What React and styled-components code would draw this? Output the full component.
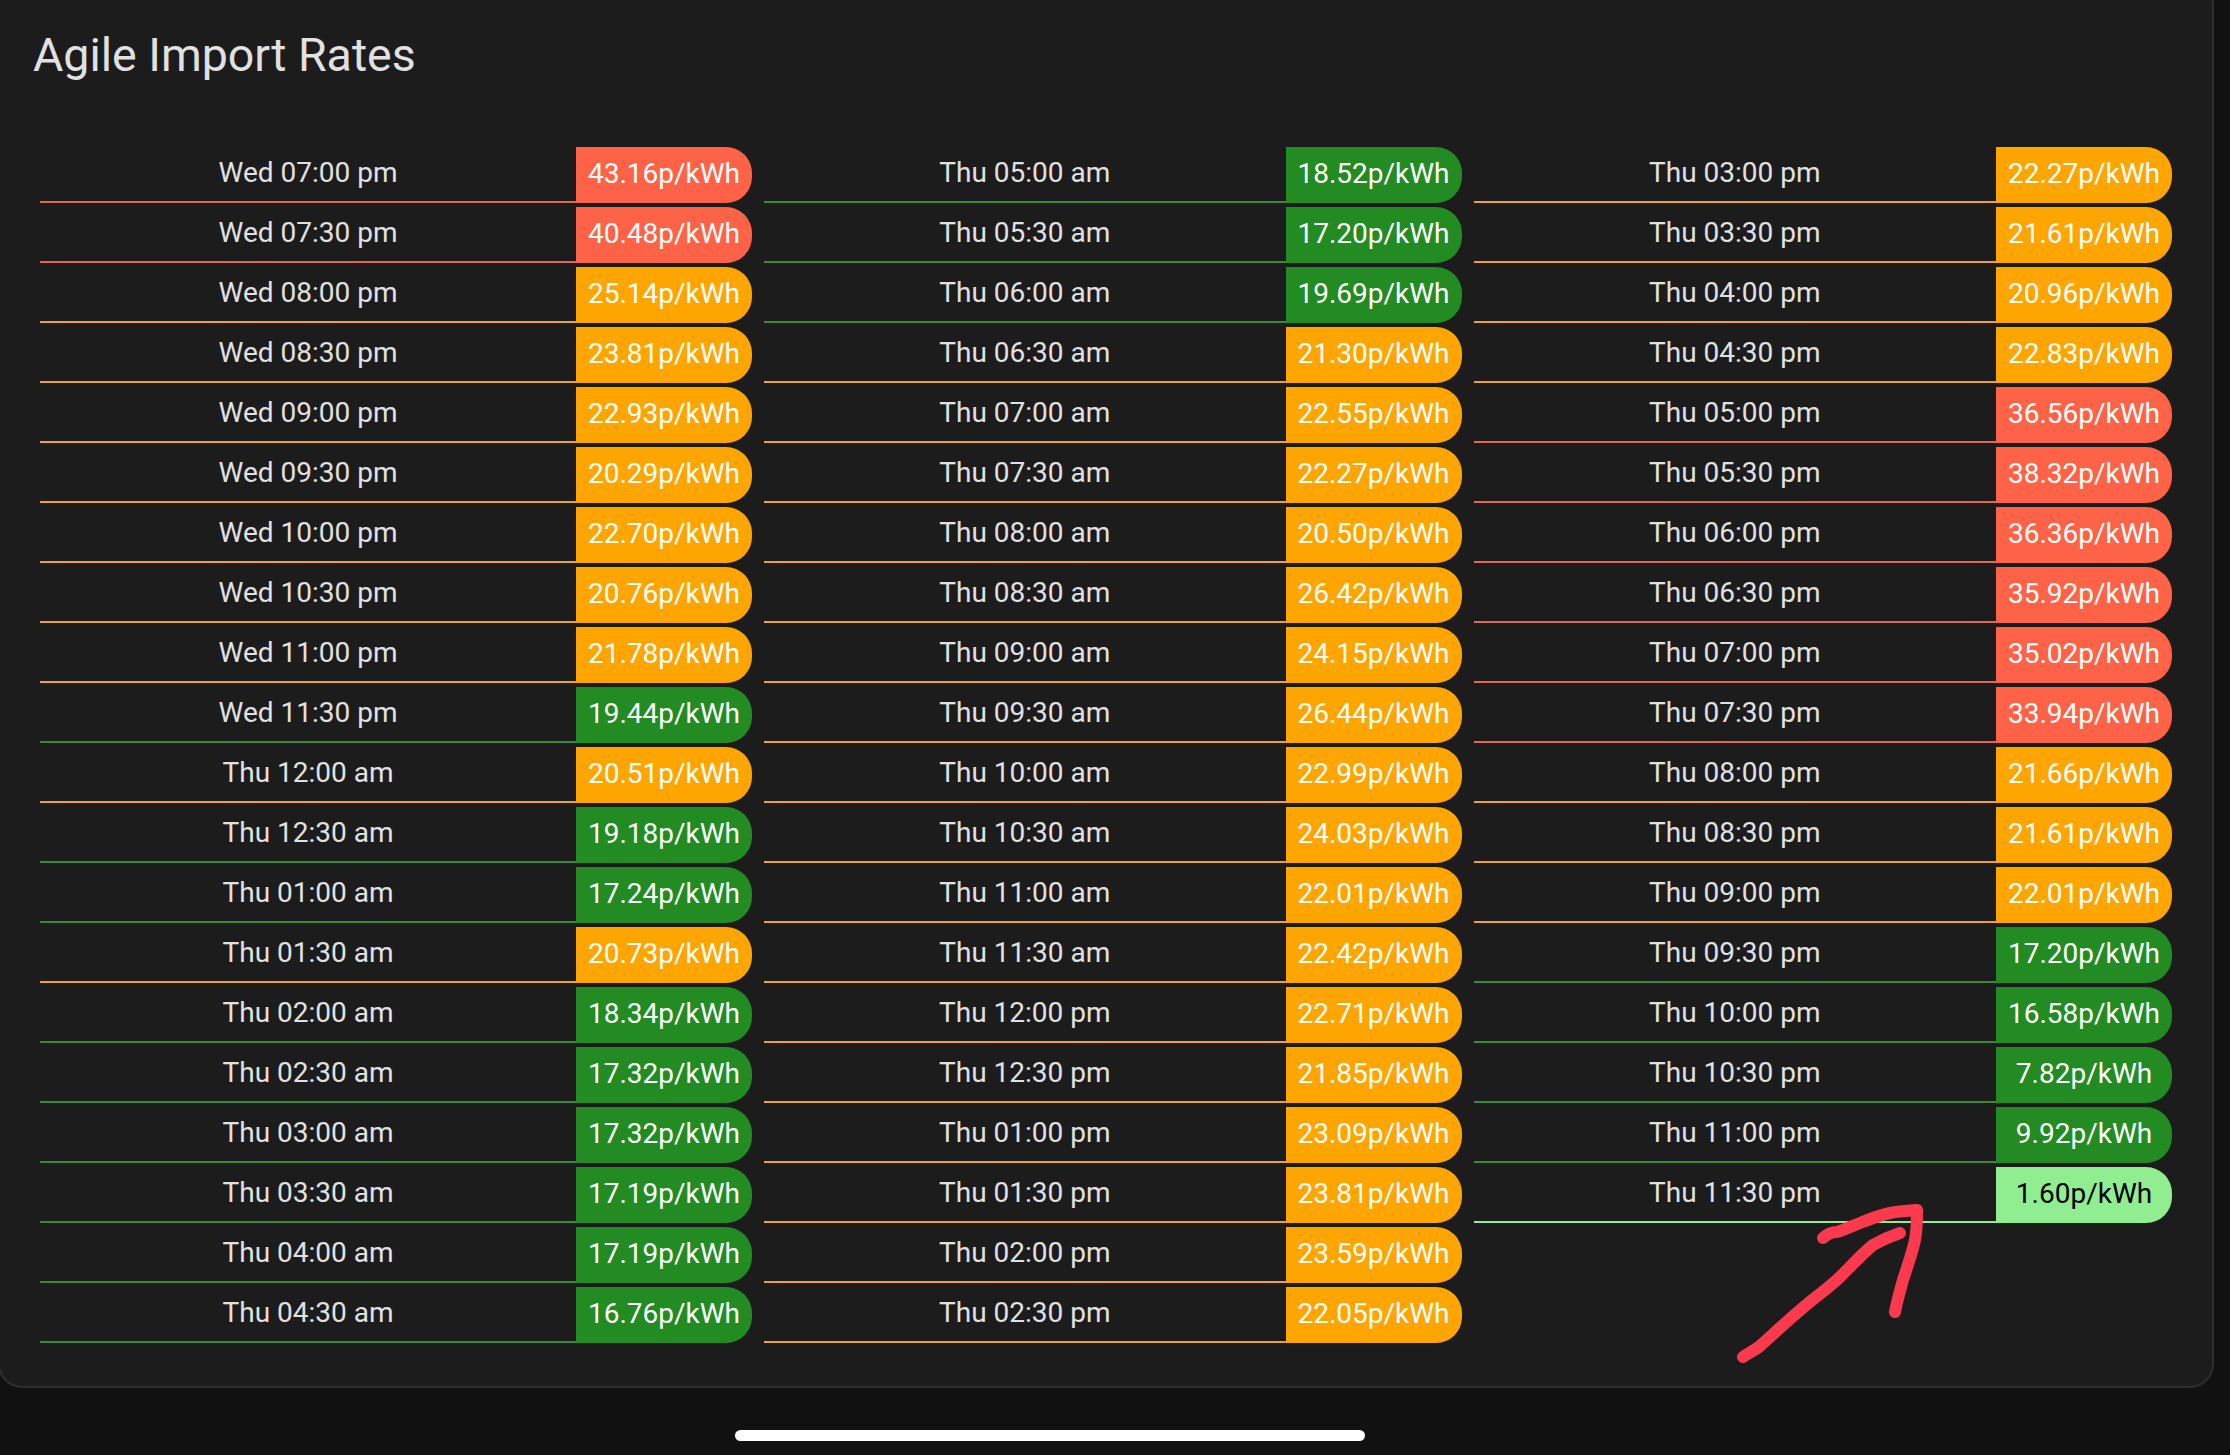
import React from "react";
import styled, { createGlobalStyle } from "styled-components";

const GlobalStyle = createGlobalStyle`
  html, body {
    margin: 0;
    padding: 0;
    background: #111111;
  }
  body {
    font-family: Roboto, "Liberation Sans", sans-serif;
  }
`;

const Screen = styled.div`
  position: relative;
  width: 2230px;
  height: 1455px;
  overflow: hidden;
  background: #111111;
  display: flex;
  flex-direction: column;
`;

const Card = styled.section`
  box-sizing: border-box;
  width: 2216px;
  height: 1408px;
  margin: -20px 0 0 -2px;
  flex-shrink: 0;
  background: #1c1c1c;
  border: 2px solid #2e2e2e;
  border-radius: 24px;
  padding: 46px 0 0 33px;
`;

const Title = styled.h1`
  margin: 0;
  height: 119px;
  font-size: 46.5px;
  line-height: 54px;
  font-weight: 400;
  color: #e1e1e1;
`;

const Columns = styled.div`
  display: flex;
  gap: 12px;
  margin-left: 7px;
`;

const Column = styled.div`
  display: flex;
  flex-direction: column;
  gap: 4px;
  width: ${(props) => props.$width}px;
`;

const Row = styled.div`
  display: flex;
  height: 56px;
`;

const Time = styled.div`
  flex: 1;
  box-sizing: border-box;
  border-bottom: 2px solid ${(props) => props.$line};
  text-align: center;
  font-size: 28px;
  line-height: 52px;
  color: #e1e1e1;
`;

const Rate = styled.div`
  width: 176px;
  height: 56px;
  border-radius: 0 26px 26px 0;
  background: ${(props) => props.$bg};
  color: ${(props) => props.$fg};
  text-align: center;
  font-size: 28px;
  line-height: 54px;
`;

const HomeBar = styled.div`
  width: 630px;
  height: 11px;
  margin: 42px auto 0;
  transform: translateX(-65px);
  border-radius: 6px;
  background: #ffffff;
`;

const Arrow = styled.svg`
  position: absolute;
  left: 0;
  top: 0;
  pointer-events: none;
`;

const tierFor = (rate) => {
  const value = parseFloat(rate);
  if (value < 5) return { bg: "#90ee90", fg: "#000000", line: "#90ee90" };
  if (value < 20) return { bg: "#228b22", fg: "#ffffff", line: "#3a8a3a" };
  if (value < 30) return { bg: "#ffa500", fg: "#ffffff", line: "#e8a33c" };
  return { bg: "#ff6347", fg: "#ffffff", line: "#e4674f" };
};

const columns = [
  {
    width: 712,
    rows: [
      ["Wed 07:00 pm", "43.16"],
      ["Wed 07:30 pm", "40.48"],
      ["Wed 08:00 pm", "25.14"],
      ["Wed 08:30 pm", "23.81"],
      ["Wed 09:00 pm", "22.93"],
      ["Wed 09:30 pm", "20.29"],
      ["Wed 10:00 pm", "22.70"],
      ["Wed 10:30 pm", "20.76"],
      ["Wed 11:00 pm", "21.78"],
      ["Wed 11:30 pm", "19.44"],
      ["Thu 12:00 am", "20.51"],
      ["Thu 12:30 am", "19.18"],
      ["Thu 01:00 am", "17.24"],
      ["Thu 01:30 am", "20.73"],
      ["Thu 02:00 am", "18.34"],
      ["Thu 02:30 am", "17.32"],
      ["Thu 03:00 am", "17.32"],
      ["Thu 03:30 am", "17.19"],
      ["Thu 04:00 am", "17.19"],
      ["Thu 04:30 am", "16.76"],
    ],
  },
  {
    width: 697.5,
    rows: [
      ["Thu 05:00 am", "18.52"],
      ["Thu 05:30 am", "17.20"],
      ["Thu 06:00 am", "19.69"],
      ["Thu 06:30 am", "21.30"],
      ["Thu 07:00 am", "22.55"],
      ["Thu 07:30 am", "22.27"],
      ["Thu 08:00 am", "20.50"],
      ["Thu 08:30 am", "26.42"],
      ["Thu 09:00 am", "24.15"],
      ["Thu 09:30 am", "26.44"],
      ["Thu 10:00 am", "22.99"],
      ["Thu 10:30 am", "24.03"],
      ["Thu 11:00 am", "22.01"],
      ["Thu 11:30 am", "22.42"],
      ["Thu 12:00 pm", "22.71"],
      ["Thu 12:30 pm", "21.85"],
      ["Thu 01:00 pm", "23.09"],
      ["Thu 01:30 pm", "23.81"],
      ["Thu 02:00 pm", "23.59"],
      ["Thu 02:30 pm", "22.05"],
    ],
  },
  {
    width: 698.5,
    rows: [
      ["Thu 03:00 pm", "22.27"],
      ["Thu 03:30 pm", "21.61"],
      ["Thu 04:00 pm", "20.96"],
      ["Thu 04:30 pm", "22.83"],
      ["Thu 05:00 pm", "36.56"],
      ["Thu 05:30 pm", "38.32"],
      ["Thu 06:00 pm", "36.36"],
      ["Thu 06:30 pm", "35.92"],
      ["Thu 07:00 pm", "35.02"],
      ["Thu 07:30 pm", "33.94"],
      ["Thu 08:00 pm", "21.66"],
      ["Thu 08:30 pm", "21.61"],
      ["Thu 09:00 pm", "22.01"],
      ["Thu 09:30 pm", "17.20"],
      ["Thu 10:00 pm", "16.58"],
      ["Thu 10:30 pm", "7.82"],
      ["Thu 11:00 pm", "9.92"],
      ["Thu 11:30 pm", "1.60"],
    ],
  },
];

const RateRow = ({ time, rate }) => {
  const tier = tierFor(rate);
  return (
    <Row>
      <Time $line={tier.line}>{time}</Time>
      <Rate $bg={tier.bg} $fg={tier.fg}>
        {rate}p/kWh
      </Rate>
    </Row>
  );
};

export default function App() {
  return (
    <Screen>
      <GlobalStyle />
      <Card>
        <Title>Agile Import Rates</Title>
        <Columns>
          {columns.map((column) => (
            <Column key={column.rows[0][0]} $width={column.width}>
              {column.rows.map(([time, rate]) => (
                <RateRow key={time} time={time} rate={rate} />
              ))}
            </Column>
          ))}
        </Columns>
      </Card>
      <HomeBar />
      {/* hand drawn annotation over the last row */}
      <Arrow width="2230" height="1455" viewBox="0 0 2230 1455" fill="none">
        <g stroke="#fb3a4d" strokeWidth="12" strokeLinecap="round" strokeLinejoin="round">
          <path d="M1743 1357 C1749 1353 1755 1350 1760 1346 C1780 1328 1798 1311 1816 1297 C1825 1290 1833 1284 1840 1277 C1851 1266 1862 1254 1873 1245 C1882 1240 1891 1236 1900 1233" />
          <path d="M1823 1238 C1827 1234 1831 1232 1837 1232 C1845 1230 1852 1226 1860 1223 C1870 1219 1880 1215 1890 1213 C1899 1211 1908 1211 1917 1210 C1917 1220 1917 1230 1915 1240 C1912 1254 1907 1267 1903 1280 C1900 1291 1897 1301 1895 1312" />
        </g>
      </Arrow>
    </Screen>
  );
}
